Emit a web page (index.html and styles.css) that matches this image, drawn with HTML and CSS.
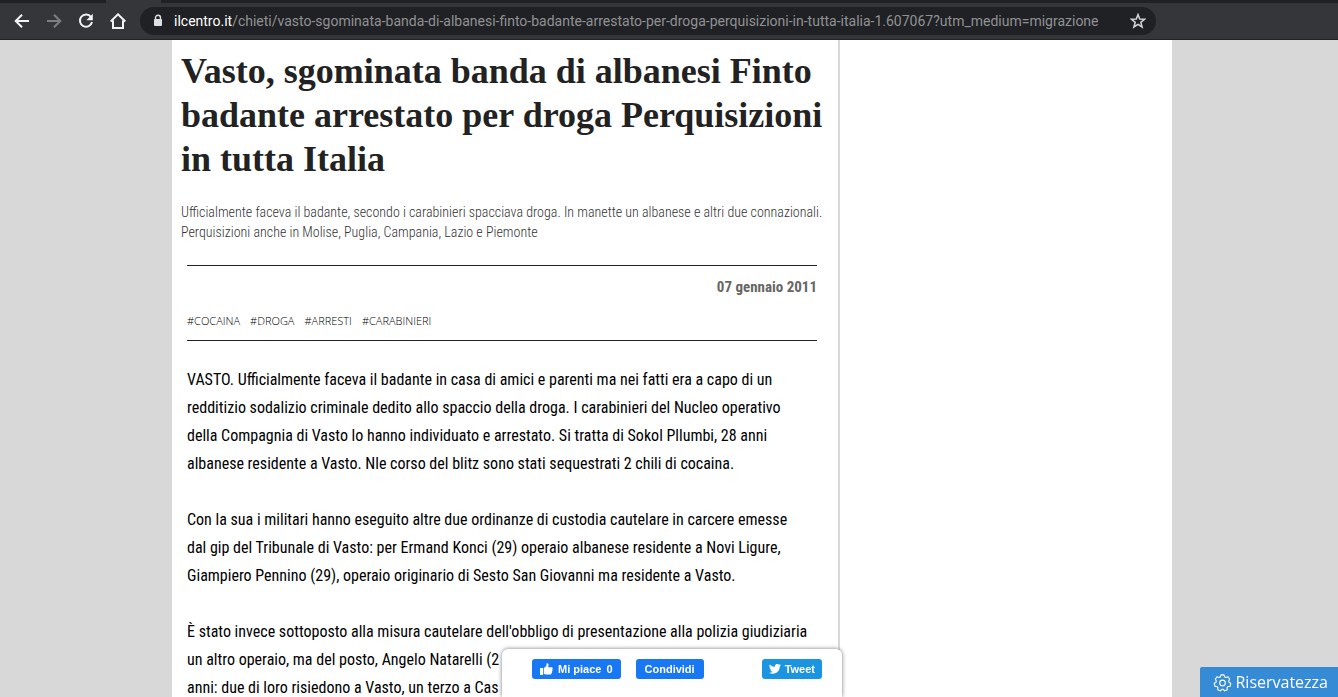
FILE: index.html
```html
<!DOCTYPE html>
<html lang="it">
<head>
<meta charset="utf-8">
<title>Vasto, sgominata banda di albanesi</title>
<link rel="stylesheet" href="styles.css">
</head>
<body>
<header class="browser">
  <div class="tabs"><span class="tab-active"></span></div>
  <nav class="toolbar">
    <button class="tool" aria-label="Indietro"><svg viewBox="0 0 16 16"><path d="M15 8H2M8 1.700 1.700 8 8 14.300"/></svg></button>
    <button class="tool tool-off" aria-label="Avanti"><svg viewBox="0 0 16 16"><path d="M1 8h13M8 1.700 14.300 8 8 14.300"/></svg></button>
    <button class="tool" aria-label="Ricarica"><svg viewBox="0 0 16 16"><path d="M13 4.100A6.100 6.100 0 1 0 14 9"/><path class="solid" d="M14.800.8v6.400H8.400z"/></svg></button>
    <button class="tool" aria-label="Pagina iniziale"><svg viewBox="0 0 16 16"><path d="M.7 8.500 8 1.300l7.300 7.200M3 7.500V15h10V7.500"/></svg></button>
    <div class="address">
      <svg class="lock" viewBox="0 0 10 14"><path d="M2.500 6V3.800a2.500 2.500 0 0 1 5 0V6" fill="none" stroke="currentColor" stroke-width="1.400"/><rect x="1" y="5" width="8" height="7" rx="1" fill="currentColor"/></svg>
      <span class="url"><b class="host">ilcentro.it</b>/chieti/vasto-sgominata-banda-di-albanesi-finto-badante-arrestato-per-droga-perquisizioni-in-tutta-italia-1.607067?utm_medium=migrazione</span>
      <button class="star" aria-label="Aggiungi ai preferiti"><svg viewBox="0 0 16 16"><path d="m8 1.600 1.700 4.500 4.800.2-3.700 3 1.300 4.700L8 11.300 3.900 14l1.300-4.700-3.700-3 4.800-.2z"/></svg></button>
    </div>
  </nav>
</header>
<div class="viewport">
  <div class="page">
    <main class="article">
      <h1 class="title">Vasto, sgominata banda di albanesi Finto<br>badante arrestato per droga Perquisizioni<br>in tutta Italia</h1>
      <p class="summary">Ufficialmente faceva il badante, secondo i carabinieri spacciava droga. In manette un albanese e altri due connazionali.<br>Perquisizioni anche in Molise, Puglia, Campania, Lazio e Piemonte</p>
      <div class="meta">
        <time class="date" datetime="2011-01-07">07 gennaio 2011</time>
        <div class="tags"><a href="#cocaina">#COCAINA</a><a href="#droga">#DROGA</a><a href="#arresti">#ARRESTI</a><a href="#carabinieri">#CARABINIERI</a></div>
      </div>
      <div class="text">
        <p>VASTO. Ufficialmente faceva il badante in casa di amici e parenti ma nei fatti era a capo di un<br>redditizio sodalizio criminale dedito allo spaccio della droga. I carabinieri del Nucleo operativo<br>della Compagnia di Vasto lo hanno individuato e arrestato. Si tratta di Sokol Pllumbi, 28 anni<br>albanese residente a Vasto. Nle corso del blitz sono stati sequestrati 2 chili di cocaina.</p>
        <p>Con la sua i militari hanno eseguito altre due ordinanze di custodia cautelare in carcere emesse<br>dal gip del Tribunale di Vasto: per Ermand Konci (29) operaio albanese residente a Novi Ligure,<br>Giampiero Pennino (29), operaio originario di Sesto San Giovanni ma residente a Vasto.</p>
        <p>È stato invece sottoposto alla misura cautelare dell'obbligo di presentazione alla polizia giudiziaria<br>un altro operaio, ma del posto, Angelo Natarelli (2<br>anni: due di loro risiedono a Vasto, un terzo a Cas</p>
      </div>
    </main>
  </div>
</div>
<aside class="share">
  <div class="facebook">
    <button class="share-btn"><svg class="thumb" viewBox="0 0 14 13"><path d="M0 5.500h3.200V13H0zM4 5.800 7 3V.8C7 0 8.900-.2 9.200 1.500c.1.900-.2 2.300-.5 3.200h3.600c1.700 0 1.900 1.900.9 2.300.7.700.4 1.700-.3 2 .5.700.1 1.600-.6 1.800.3.900-.3 1.700-1.300 1.700H7C5.600 12.500 5 12 4 12z"/></svg><span>Mi piace</span><span>0</span></button>
    <button class="share-btn share-post">Condividi</button>
  </div>
  <button class="share-btn tweet"><svg class="bird" viewBox="0 0 24 20"><path d="M24 2.400a10 10 0 0 1-2.800.8A5 5 0 0 0 23.300.500a10 10 0 0 1-3.100 1.200 4.900 4.900 0 0 0-8.400 4.500A14 14 0 0 1 1.700 1a4.900 4.900 0 0 0 1.500 6.600A5 5 0 0 1 1 7v.1a4.900 4.900 0 0 0 3.900 4.800 5 5 0 0 1-2.200.1 4.900 4.900 0 0 0 4.600 3.400A10 10 0 0 1 0 17.500 14 14 0 0 0 7.500 19.700c9.100 0 14.400-7.700 14-14.700A10 10 0 0 0 24 2.400z"/></svg><span>Tweet</span></button>
</aside>
<button class="privacy"><svg viewBox="0 0 20 20"><path d="M8.200 1h3.600l.6 2.300 1.500.8 2.300-.9 2.200 2.700-1.100 2.200.4 1.700 2.100 1.300-.9 3.400-2.500.2-1 1.300.3 2.400-3.200 1.400L10.900 18H9.100l-1.600 1.800-3.200-1.400.3-2.400-1-1.300-2.500-.2-.9-3.400 2.100-1.300.4-1.700-1.100-2.200 2.200-2.700 2.300.9 1.500-.8z"/><circle cx="10" cy="10.500" r="3.300"/></svg><span>Riservatezza</span></button>
</body>
</html>
```
FILE: styles.css
```css
* { box-sizing: border-box; }
body {
  margin: 0;
  height: 100vh;
  display: flex;
  flex-direction: column;
  overflow: hidden;
  background: #d8d8d8;
  font-family: "Roboto Condensed", Roboto, sans-serif;
}
button { border: 0; padding: 0; background: none; font: inherit; color: inherit; cursor: pointer; }
h1, p { margin: 0; }
.browser { flex: none; background: #35363a; border-bottom: 1px solid #222326; }
.tabs { height: 3px; padding-left: 106px; background: #202124; }
.tab-active { display: block; width: 55px; height: 3px; background: #35363a; }
.toolbar { display: flex; align-items: center; height: 36px; padding-left: 14px; color: #f1f3f4; }
.tool { width: 16px; height: 16px; margin-right: 16px; }
.tool svg, .star svg { display: block; width: 100%; height: 100%; fill: none; stroke: currentColor; stroke-width: 2; }
.tool .solid { fill: currentColor; stroke: none; }
.tool-off { color: #7d7e82; }
.address {
  display: flex;
  align-items: center;
  width: calc(100% - 308px);
  height: 28px;
  margin-left: -2px;
  padding: 0 10px 0 13px;
  border-radius: 14px;
  background: #202124;
}
.lock { flex: none; width: 10px; height: 14px; margin-right: 11px; color: #dedfe0; }
.url { flex: 1; min-width: 0; overflow: hidden; white-space: nowrap; font: 14px/20px Roboto, sans-serif; color: #909194; }
.host { font-weight: 400; color: #fff; }
.star { flex: none; width: 16px; height: 16px; color: #d5d6d8; }
.star svg { stroke-width: 1.5; }
.viewport { flex: 1; min-height: 0; overflow: hidden; padding-left: 6px; }
.page { width: 100%; max-width: 1000px; min-height: 100%; margin: 0 auto; background: #fff; }
.article { width: 668px; padding: 9px 0 40px; border-right: 2px solid #d8d8d8; white-space: nowrap; }
.title { padding-left: 9px; font: 700 36px/44px "Liberation Serif", serif; color: #222; }
.summary { margin-top: 21px; padding-left: 9px; font-size: 14px; font-weight: 300; line-height: 20px; color: #333; }
.meta { margin: 23px 21px 0 15px; border: solid #222; border-width: 1px 0; }
.date { display: block; padding-top: 11px; text-align: right; font-size: 15px; line-height: 20px; font-weight: 700; color: #666; }
.tags { display: flex; gap: 10px; padding: 14px 0 10px; font: 300 11px/19px "Open Sans", sans-serif; }
.tags a { color: #000; text-decoration: none; }
.text { display: grid; gap: 28px; padding: 25px 0 0 15px; font-size: 16px; line-height: 28px; color: #000; }
.share {
  position: fixed;
  left: 50%;
  bottom: 0;
  display: flex;
  justify-content: space-between;
  align-items: flex-start;
  width: 340px;
  height: 48px;
  margin-left: -167px;
  padding: 10px 20px 0 30px;
  border-radius: 6px 6px 0 0;
  background: #fff;
  box-shadow: 0 0 4px #777;
}
.facebook { display: flex; gap: 15px; }
.share-btn {
  display: flex;
  align-items: center;
  gap: 5px;
  height: 20px;
  padding: 0 8px;
  border-radius: 3px;
  background: #1877f2;
  color: #fff;
  font: 700 11px/20px "Liberation Sans", sans-serif;
}
.share-btn svg { fill: currentColor; }
.share-post { padding: 0 9px; }
.thumb { width: 13px; height: 12px; }
.tweet { gap: 4px; padding: 0 7px; background: #1b95e0; }
.bird { width: 12px; height: 10px; }
.privacy {
  position: fixed;
  right: 0;
  bottom: 0;
  display: flex;
  align-items: center;
  gap: 4px;
  height: 30px;
  padding: 0 10px 0 14px;
  border-radius: 2px 0 0 0;
  background: #368bd6;
  color: #fff;
  font: 16px/30px "Open Sans", sans-serif;
}
.privacy svg { width: 17px; height: 17px; fill: none; stroke: currentColor; stroke-width: 1.3; stroke-linejoin: round; overflow: visible; }
```
